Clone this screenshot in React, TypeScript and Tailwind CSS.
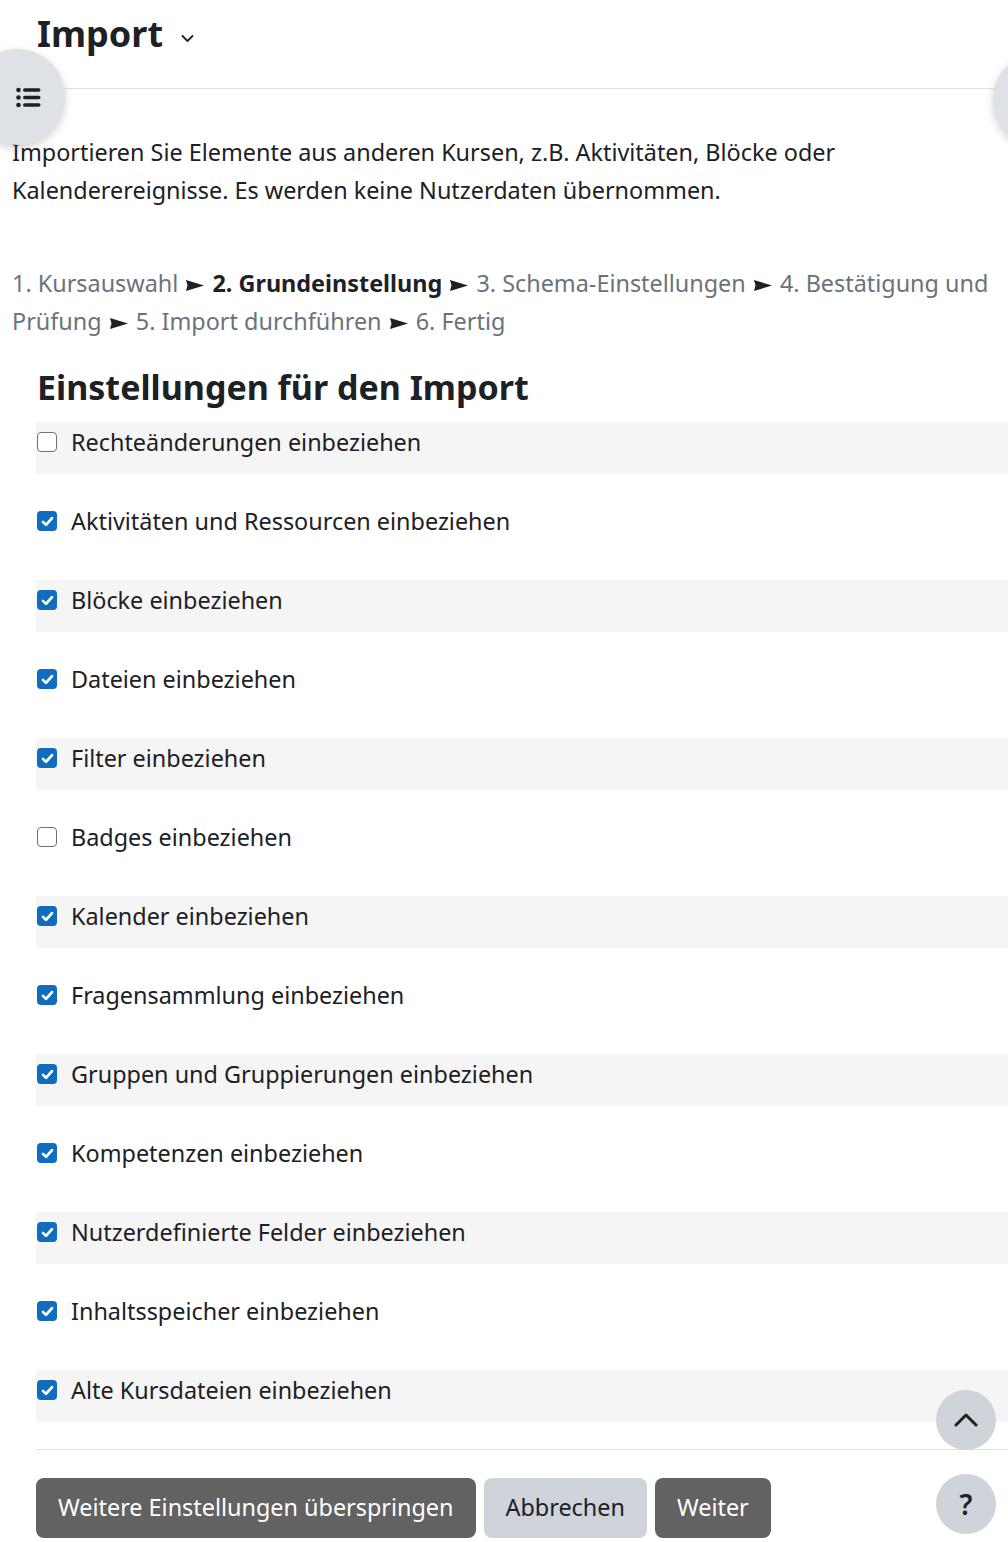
import React from "react";

const items: [string, boolean][] = [
  ["Rechteänderungen einbeziehen", false],
  ["Aktivitäten und Ressourcen einbeziehen", true],
  ["Blöcke einbeziehen", true],
  ["Dateien einbeziehen", true],
  ["Filter einbeziehen", true],
  ["Badges einbeziehen", false],
  ["Kalender einbeziehen", true],
  ["Fragensammlung einbeziehen", true],
  ["Gruppen und Gruppierungen einbeziehen", true],
  ["Kompetenzen einbeziehen", true],
  ["Nutzerdefinierte Felder einbeziehen", true],
  ["Inhaltsspeicher einbeziehen", true],
  ["Alte Kursdateien einbeziehen", true],
];

function Box({ checked }: { checked: boolean }) {
  if (checked) {
    return (
      <span className="flex h-[20px] w-[20px] shrink-0 items-center justify-center rounded-[4px] bg-[#0f6cbf]">
        <svg width="15" height="15" viewBox="0 0 16 16" fill="none">
          <path d="M3.2 8.4l3.2 3.2 6.4-7.2" stroke="white" strokeWidth="3" strokeLinecap="round" strokeLinejoin="round" />
        </svg>
      </span>
    );
  }
  return <span className="h-[20px] w-[20px] shrink-0 rounded-[4px] border-[1.5px] border-[#6c7378] bg-white" />;
}

function Arrow() {
  return (
    <svg className="mx-[2px] inline-block align-baseline" width="18" height="11" viewBox="0 0 18 11" fill="#1d2125" style={{ marginBottom: "1px" }}>
      <path d="M0 0L18 5.5L0 11L1.5 5.5Z" />
    </svg>
  );
}

export default function App() {
  return (
    <div
      className="relative h-[1542px] w-[1008px] overflow-hidden bg-white text-[#1d2125]"
      style={{ fontFamily: '"Noto Sans", "Open Sans", sans-serif' }}
    >
      {/* header */}
      <div className="flex h-[89px] items-start border-b border-[#dee2e6] pl-[37px] pt-[8px]">
        <h1 className="text-[36px] font-bold leading-[52px]">Import</h1>
        <svg className="ml-[18px] mt-[26px]" width="13" height="9" viewBox="0 0 13 9" fill="none">
          <path d="M1.5 2l5 5 5-5" stroke="#1d2125" strokeWidth="1.8" strokeLinecap="round" strokeLinejoin="round" />
        </svg>
      </div>

      {/* drawer toggles */}
      <div className="absolute left-[-31px] top-[49px] flex h-[96px] w-[96px] items-center justify-end rounded-full bg-[#dee2e6] pr-[24px] shadow-[0_3px_8px_rgba(0,0,0,0.18)]">
        <svg width="25" height="21" viewBox="0 0 25 21" fill="#1d2125">
          <circle cx="2.5" cy="3" r="2.3" />
          <circle cx="2.5" cy="10.5" r="2.3" />
          <circle cx="2.5" cy="18" r="2.3" />
          <rect x="7" y="1.3" width="17.5" height="3.4" rx="1.7" />
          <rect x="7" y="8.8" width="17.5" height="3.4" rx="1.7" />
          <rect x="7" y="16.3" width="17.5" height="3.4" rx="1.7" />
        </svg>
      </div>
      <div className="absolute left-[993px] top-[52px] h-[96px] w-[96px] rounded-full bg-[#dee2e6] shadow-[0_3px_8px_rgba(0,0,0,0.18)]" />

      {/* intro */}
      <p className="mt-[44px] pl-[12px] pr-[20px] text-[23.4px] leading-[38px]">
        Importieren Sie Elemente aus anderen Kursen, z.B. Aktivitäten, Blöcke oder Kalenderereignisse. Es werden keine Nutzerdaten übernommen.
      </p>

      <p className="mt-[55px] h-[76px] pl-[12px] pr-[8px] text-[23.4px] leading-[38px] text-[#6a737b]">
        1. Kursauswahl <Arrow /> <b className="font-bold text-[#1d2125]">2. Grundeinstellung</b> <Arrow /> 3. Schema-Einstellungen <Arrow /> 4. Bestätigung und Prüfung <Arrow /> 5. Import durchführen <Arrow /> 6. Fertig
      </p>

      <h2 className="mt-[25px] pl-[37px] text-[34px] font-bold leading-[44px]">Einstellungen für den Import</h2>

      <div className="mt-[13px] pl-[36px]">
        {items.map(([label, checked], i) => (
          <div
            key={label}
            className={`mb-[27px] flex h-[52px] items-start gap-[14px] pl-[1px] pt-[1px] ${i % 2 === 0 ? "bg-[#f5f5f5]" : ""}`}
          >
            <span className="flex h-[38px] items-center">
              <Box checked={checked} />
            </span>
            <span className="text-[23.4px] leading-[38px]">{label}</span>
          </div>
        ))}
      </div>

      <div className="ml-[36px] mt-[2px] border-t border-[#dee2e6]" />

      <div className="mt-[28px] flex gap-[8px] pl-[36px]">
        <button className="h-[60px] rounded-[8px] bg-[#626262] px-[22px] text-[23.4px] text-white">Weitere Einstellungen überspringen</button>
        <button className="h-[60px] rounded-[8px] bg-[#ced4da] px-[22px] text-[23.4px] text-[#1d2125]">Abbrechen</button>
        <button className="h-[60px] rounded-[8px] bg-[#626262] px-[22px] text-[23.4px] text-white">Weiter</button>
      </div>

      {/* floating buttons */}
      <div className="absolute left-[936px] top-[1390px] flex h-[60px] w-[60px] items-center justify-center rounded-full bg-[#ced4da]">
        <svg width="24" height="14" viewBox="0 0 24 14" fill="none">
          <path d="M2 12L12 2l10 10" stroke="#1d2125" strokeWidth="3" strokeLinecap="round" strokeLinejoin="round" />
        </svg>
      </div>
      <div className="absolute left-[936px] top-[1474px] flex h-[60px] w-[60px] items-center justify-center rounded-full bg-[#ced4da] text-[28px] font-semibold text-[#1d2125]">
        ?
      </div>
    </div>
  );
}
